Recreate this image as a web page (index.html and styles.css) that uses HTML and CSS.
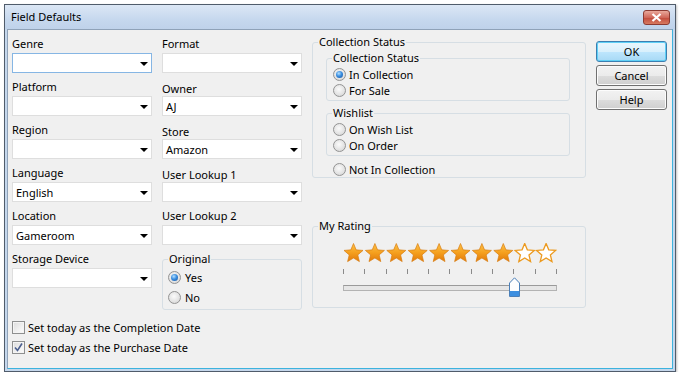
FILE: index.html
```html
<!DOCTYPE html>
<html lang="en">
<head>
  <meta charset="UTF-8" />
  <title>Field Defaults</title>
  <link rel="stylesheet" href="styles.css">
</head>
<body>
  <div class="window">
    <div class="titlebar">
      <span class="title">Field Defaults</span>
      <button class="close-btn">
        <svg width="11" height="9" viewBox="0 0 11 9"><path d="M1.5 1 L9.5 8 M9.5 1 L1.5 8" stroke="#fff" stroke-width="2.2" /></svg>
      </button>
    </div>

    <div class="content">
      <div class="main-row">
        <div class="field-col">
          <div class="field">
            <div class="label">Genre</div>
            <div class="combo focused"><span class="combo-value"></span><span class="combo-arrow"></span></div>
          </div>
          <div class="field">
            <div class="label">Platform</div>
            <div class="combo"><span class="combo-value"></span><span class="combo-arrow"></span></div>
          </div>
          <div class="field">
            <div class="label">Region</div>
            <div class="combo"><span class="combo-value"></span><span class="combo-arrow"></span></div>
          </div>
          <div class="field">
            <div class="label">Language</div>
            <div class="combo"><span class="combo-value">English</span><span class="combo-arrow"></span></div>
          </div>
          <div class="field">
            <div class="label">Location</div>
            <div class="combo"><span class="combo-value">Gameroom</span><span class="combo-arrow"></span></div>
          </div>
          <div class="field">
            <div class="label">Storage Device</div>
            <div class="combo"><span class="combo-value"></span><span class="combo-arrow"></span></div>
          </div>
        </div>

        <div class="field-col">
          <div class="field">
            <div class="label">Format</div>
            <div class="combo"><span class="combo-value"></span><span class="combo-arrow"></span></div>
          </div>
          <div class="field">
            <div class="label low">Owner</div>
            <div class="combo"><span class="combo-value">AJ</span><span class="combo-arrow"></span></div>
          </div>
          <div class="field">
            <div class="label low">Store</div>
            <div class="combo"><span class="combo-value">Amazon</span><span class="combo-arrow"></span></div>
          </div>
          <div class="field">
            <div class="label low">User Lookup 1</div>
            <div class="combo"><span class="combo-value"></span><span class="combo-arrow"></span></div>
          </div>
          <div class="field">
            <div class="label">User Lookup 2</div>
            <div class="combo"><span class="combo-value"></span><span class="combo-arrow"></span></div>
          </div>
          <fieldset class="group original">
            <legend>Original</legend>
            <div class="option tall"><span class="radio checked"></span>Yes</div>
            <div class="option tall"><span class="radio"></span>No</div>
          </fieldset>
        </div>

        <div class="group-col">
          <fieldset class="group">
            <legend>Collection Status</legend>
            <fieldset class="group inner">
              <legend>Collection Status</legend>
              <div class="option"><span class="radio checked"></span>In Collection</div>
              <div class="option"><span class="radio"></span>For Sale</div>
            </fieldset>
            <fieldset class="group inner wishlist">
              <legend>Wishlist</legend>
              <div class="option"><span class="radio"></span>On Wish List</div>
              <div class="option"><span class="radio"></span>On Order</div>
            </fieldset>
            <div class="option not-in"><span class="radio"></span>Not In Collection</div>
          </fieldset>

          <fieldset class="group rating">
            <legend>My Rating</legend>
            <div class="rating-body">
              <svg class="stars" width="214" height="20" viewBox="0 0 214 20">
                <defs>
                  <linearGradient id="starFill" x1="0" y1="0" x2="0" y2="1">
                    <stop offset="0" stop-color="#fcc24a" />
                    <stop offset="0.5" stop-color="#f5a01e" />
                    <stop offset="1" stop-color="#e27a0a" />
                  </linearGradient>
                  <path id="star" d="M10.5 0.5 L13.15 6.86 L20 7.41 L14.78 11.89 L16.38 18.59 L10.5 15 L4.62 18.59 L6.22 11.89 L1 7.41 L7.85 6.86 Z" />
                </defs>
                <use href="#star" x="0" class="star-on" />
                <use href="#star" x="21.4" class="star-on" />
                <use href="#star" x="42.8" class="star-on" />
                <use href="#star" x="64.2" class="star-on" />
                <use href="#star" x="85.6" class="star-on" />
                <use href="#star" x="107" class="star-on" />
                <use href="#star" x="128.4" class="star-on" />
                <use href="#star" x="149.8" class="star-on" />
                <use href="#star" x="171.2" class="star-off" />
                <use href="#star" x="192.6" class="star-off" />
              </svg>
              <div class="ticks">
                <span></span><span></span><span></span><span></span><span></span><span></span>
                <span></span><span></span><span></span><span></span><span></span>
              </div>
              <div class="track">
                <svg class="thumb" width="11" height="20" viewBox="0 0 11 20">
                  <path d="M0.5 19.5 V6 L5.5 0.8 L10.5 6 V19.5 Z" fill="#fdfdfd" stroke="#4a7fb8" />
                  <rect x="1" y="14" width="9" height="5" fill="#3d8fe0" />
                </svg>
              </div>
            </div>
          </fieldset>
        </div>

        <div class="button-col">
          <button class="btn default">OK</button>
          <button class="btn">Cancel</button>
          <button class="btn">Help</button>
        </div>
      </div>

      <div class="checks">
        <div class="option check-row"><span class="checkbox"></span>Set today as the Completion Date</div>
        <div class="option check-row">
          <span class="checkbox">
            <svg width="11" height="11" viewBox="0 0 11 11"><path d="M2 5.5 L4.5 8.5 L9 1.5" fill="none" stroke="#4b5f8f" stroke-width="1.6" /></svg>
          </span>Set today as the Purchase Date
        </div>
      </div>
    </div>
  </div>
</body>
</html>
```

FILE: styles.css
```css
* {
  box-sizing: border-box;
}
body {
  margin: 0;
  background: #fff;
  font-family: 'Noto Sans', sans-serif;
  font-size: 11px;
  color: #000;
}
.window {
  margin: 4px 0 0 4px;
  width: 672px;
  height: 368px;
  border: 1px solid #505c6b;
  padding: 0 2px 2px 2px;
  background: #c5d7ec;
  display: flex;
  flex-direction: column;
  box-shadow: 1px 1px 2px rgba(0, 0, 0, 0.25);
}
.titlebar {
  height: 24px;
  display: flex;
  align-items: center;
  justify-content: space-between;
  padding: 0 5px 0 6px;
  margin: 0 -2px;
  background: linear-gradient(#dce7f5, #c6d8ee 60%, #bfd2ea);
}
.title {
  line-height: 16px;
}
.close-btn {
  width: 27px;
  height: 15px;
  border: 1px solid #8c3b32;
  border-radius: 3px;
  background: linear-gradient(#e9a99c, #d0685a 50%, #c14a3c 51%, #d77a60);
  display: flex;
  align-items: center;
  justify-content: center;
  padding: 0;
}
.content {
  flex: 1;
  background: #f0f0f0;
  border: 1px solid;
  border-color: #8fa2b8 #3cb3de #3cb3de #8fa2b8;
  padding: 4px 4px 0 4px;
}
.main-row {
  display: flex;
  gap: 10px;
  align-items: flex-start;
}
.field-col {
  width: 140px;
  margin-top: 2px;
  display: flex;
  flex-direction: column;
}
.field {
  margin-bottom: 6px;
}
.label {
  line-height: 16px;
  margin-bottom: 1px;
}
.label.low {
  line-height: 15px;
  margin-top: 2px;
  margin-bottom: 0;
}
.combo {
  height: 20px;
  background: #fff;
  border: 1px solid #dedede;
  display: flex;
  align-items: center;
  justify-content: space-between;
  padding: 0 3px 0 3px;
}
.combo.focused {
  border-color: #86b6e4;
}
.combo-arrow {
  width: 0;
  height: 0;
  border-left: 4px solid transparent;
  border-right: 4px solid transparent;
  border-top: 4px solid #000;
  margin-top: 1px;
}
.group {
  margin: 0;
  padding: 0;
  border: 1px solid #d6dee4;
  border-radius: 3px;
  min-width: 0;
}
.group legend {
  margin-left: 5px;
  padding: 0 1px;
  line-height: 16px;
}
.original {
  padding-bottom: 2px;
}
.original .option {
  margin-left: 5px;
}
.option {
  display: flex;
  align-items: center;
  gap: 3px;
  height: 16px;
  white-space: nowrap;
}
.option.tall {
  height: 20px;
  gap: 4px;
}
.radio {
  width: 13px;
  height: 13px;
  border-radius: 50%;
  border: 1px solid #939393;
  background: radial-gradient(circle at 45% 40%, #fbfbfb, #e2e2e2 60%, #cfcfcf);
  display: flex;
  align-items: center;
  justify-content: center;
  flex-shrink: 0;
}
.radio.checked::after {
  content: '';
  width: 7px;
  height: 7px;
  border-radius: 50%;
  background: radial-gradient(circle at 40% 35%, #b4e0ff, #3a8ee0 45%, #16509a);
}
.group-col {
  width: 274px;
}
.inner {
  margin: 0 15px 0 13px;
  padding-bottom: 2px;
}
.inner .option {
  margin-left: 6px;
}
.wishlist {
  margin-top: 4px;
}
.not-in {
  margin: 5px 0 0 20px;
}
.rating {
  margin-top: 40px;
  padding-bottom: 16px;
}
.rating-body {
  width: 214px;
  margin-left: 30px;
}
.stars {
  display: block;
  margin-top: 9px;
}
.star-on {
  fill: url(#starFill);
  stroke: #d97c10;
  stroke-width: 0.7;
}
.star-off {
  fill: #fff;
  stroke: #ec9a1f;
  stroke-width: 1.3;
}
.ticks {
  display: flex;
  justify-content: space-between;
  margin-top: 6px;
  height: 5px;
}
.ticks span {
  width: 1px;
  height: 5px;
  background: #8a8a8a;
}
.track {
  position: relative;
  margin-top: 11px;
  height: 6px;
  border: 1px solid #b3b3b3;
  border-top-color: #9a9a9a;
  background: #e6e6e6;
}
.thumb {
  position: absolute;
  left: 165px;
  top: -9px;
}
.button-col {
  width: 71px;
  margin-top: 7px;
  display: flex;
  flex-direction: column;
  gap: 3px;
}
.btn {
  height: 21px;
  font-family: 'Noto Sans', sans-serif;
  font-size: 11px;
  color: #000;
  border: 1px solid #707070;
  border-radius: 3px;
  background: linear-gradient(#f2f2f2, #ebebeb 50%, #dddddd 51%, #cfcfcf);
  box-shadow: inset 0 0 0 1px #fcfcfc;
  padding: 0;
}
.btn.default {
  border-color: #3c7fb1;
  box-shadow: inset 0 0 0 1px #5fd0f6;
  background: linear-gradient(#eaf6fd, #d9f0fc 50%, #bee6fd 51%, #a7d9f5);
}
.checks {
  margin-top: 7px;
}
.check-row {
  height: 20px;
  gap: 3px;
}
.checkbox {
  width: 13px;
  height: 13px;
  border: 1px solid #8e8f8f;
  background: linear-gradient(135deg, #dcdcdc, #f4f4f4 70%, #fdfdfd);
  box-shadow: inset 0 0 0 1px #f4f4f4;
  display: flex;
  align-items: center;
  justify-content: center;
  flex-shrink: 0;
}
```
